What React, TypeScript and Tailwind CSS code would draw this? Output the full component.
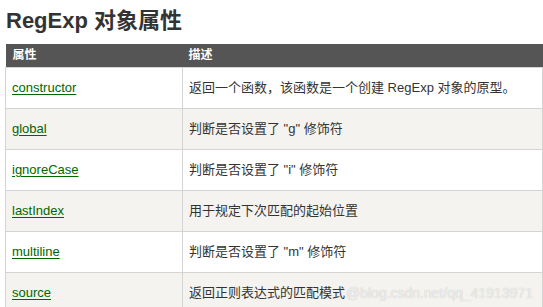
const rows = [
  { name: "constructor", desc: "返回一个函数，该函数是一个创建 RegExp 对象的原型。" },
  { name: "global", desc: "判断是否设置了 \"g\" 修饰符" },
  { name: "ignoreCase", desc: "判断是否设置了 \"i\" 修饰符" },
  { name: "lastIndex", desc: "用于规定下次匹配的起始位置" },
  { name: "multiline", desc: "判断是否设置了 \"m\" 修饰符" },
  { name: "source", desc: "返回正则表达式的匹配模式" },
]

export default function App() {
  return (
    <div
      className="relative w-[543px] h-[307px] overflow-hidden bg-white"
      style={{ fontFamily: '"Liberation Sans", "Noto Sans CJK SC", sans-serif' }}
    >
      <h1 className="pl-[6px] pt-[7px] h-[44px] text-[22px] leading-[28px] font-bold text-[#333]">
        RegExp 对象属性
      </h1>

      <table className="ml-[5px] w-[538px] border-collapse text-[13px] text-[#333]">
        <thead>
          <tr className="bg-[#555] text-white text-[12px] font-bold h-[23px]">
            <th className="w-[177px] pl-[7px] text-left font-bold">属性</th>
            <th className="pl-[6px] text-left font-bold">描述</th>
          </tr>
        </thead>
        <tbody>
          {rows.map((row, i) => (
            <tr key={row.name} className={i % 2 === 1 ? "bg-[#f4f3f0] h-[41px]" : "bg-white h-[41px]"}>
              <td className="border border-[#d4d4d4] pl-[6px] align-middle">
                <span className="text-[#006600] underline underline-offset-2">{row.name}</span>
              </td>
              <td className="border border-[#d4d4d4] pl-[6px] align-middle">{row.desc}</td>
            </tr>
          ))}
        </tbody>
      </table>

      <div className="absolute left-[346px] top-[283px] text-[14px] text-white/70 whitespace-nowrap [text-shadow:0_0_1px_rgba(0,0,0,0.25)]">
        @blog.csdn.net/qq_41913971
      </div>
    </div>
  )
}
